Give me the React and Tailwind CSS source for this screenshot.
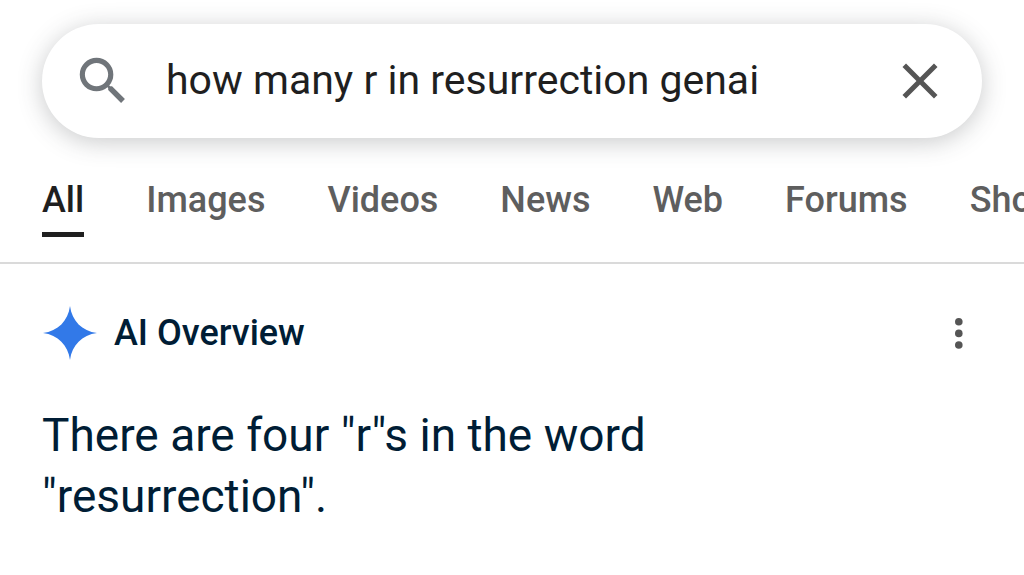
const tabs = ["Images", "Videos", "News", "Web", "Forums", "Shopping"];

const SearchBar = () => {
  return (
    <form
      role="search"
      className="flex items-center h-[114px] mx-[42px] pl-[34px] pr-9 rounded-full bg-white shadow-[0_4px_24px_rgba(60,64,67,0.28)]"
    >
      <button type="button" aria-label="Search" className="shrink-0">
        <svg viewBox="0 0 24 24" className="size-[62px] -m-1 fill-[#70757a]">
          <path d="M15.5 14h-.79l-.28-.27A6.47 6.47 0 0 0 16 9.5 6.5 6.5 0 1 0 9.5 16c1.61 0 3.09-.59 4.23-1.57l.27.28v.79l5 4.99L20.49 19l-4.99-5zm-6 0C7.01 14 5 11.99 5 9.5S7.01 5 9.5 5 14 7.01 14 9.5 11.99 14 9.5 14z" />
        </svg>
      </button>
      <input
        type="text"
        name="q"
        aria-label="Search query"
        defaultValue="how many r in resurrection genai"
        className="flex-1 min-w-0 ml-9 text-[41px] text-[#1f1f1f] outline-none"
      />
      <button type="reset" aria-label="Clear" className="shrink-0">
        <svg viewBox="0 0 24 24" className="size-[60px] -m-1 fill-[#555555]">
          <path d="M19 6.41L17.59 5 12 10.59 6.41 5 5 6.41 10.59 12 5 17.59 6.41 19 12 13.41 17.59 19 19 17.59 13.41 12z" />
        </svg>
      </button>
    </form>
  );
};

const Tabs = () => {
  return (
    <nav className="flex gap-[62px] mt-[42px] pl-[42px] pb-[25px] border-b-2 border-[#dadada] overflow-hidden text-4xl font-medium text-[#5e5e5e]">
      <a href="#all" aria-current="page" className="pb-3 border-b-5 border-[#1f1f1f] text-[#1f1f1f]">
        All
      </a>
      {tabs.map((tab) => (
        <a key={tab} href={`#${tab.toLowerCase()}`}>
          {tab}
        </a>
      ))}
    </nav>
  );
};

const Overview = () => {
  return (
    <section className="px-[42px] pt-[41px] text-[#001d35]">
      <div className="flex items-center">
        <svg viewBox="0 0 56 56" className="size-14 fill-[#3279e8]">
          <path d="M28 1C30 16 40 26 55 28C40 30 30 40 28 55C26 40 16 30 1 28C16 26 26 16 28 1Z" />
        </svg>
        <h2 className="ml-4 text-4xl font-medium">AI Overview</h2>
        <button type="button" aria-label="More options" className="ml-auto">
          <svg viewBox="0 0 24 24" className="size-12 fill-[#555555]">
            <circle cx="12.4" cy="6.4" r="1.9" />
            <circle cx="12.4" cy="12.2" r="1.9" />
            <circle cx="12.4" cy="18" r="1.9" />
          </svg>
        </button>
      </div>
      <p className="max-w-[720px] mt-11 text-[46px] leading-[61px]">
        There are four "r"s in the word "resurrection".
      </p>
    </section>
  );
};

const App = () => {
  return (
    <main className="pt-6 bg-white font-[Roboto,sans-serif]">
      <SearchBar />
      <Tabs />
      <Overview />
    </main>
  );
};

export default App;
